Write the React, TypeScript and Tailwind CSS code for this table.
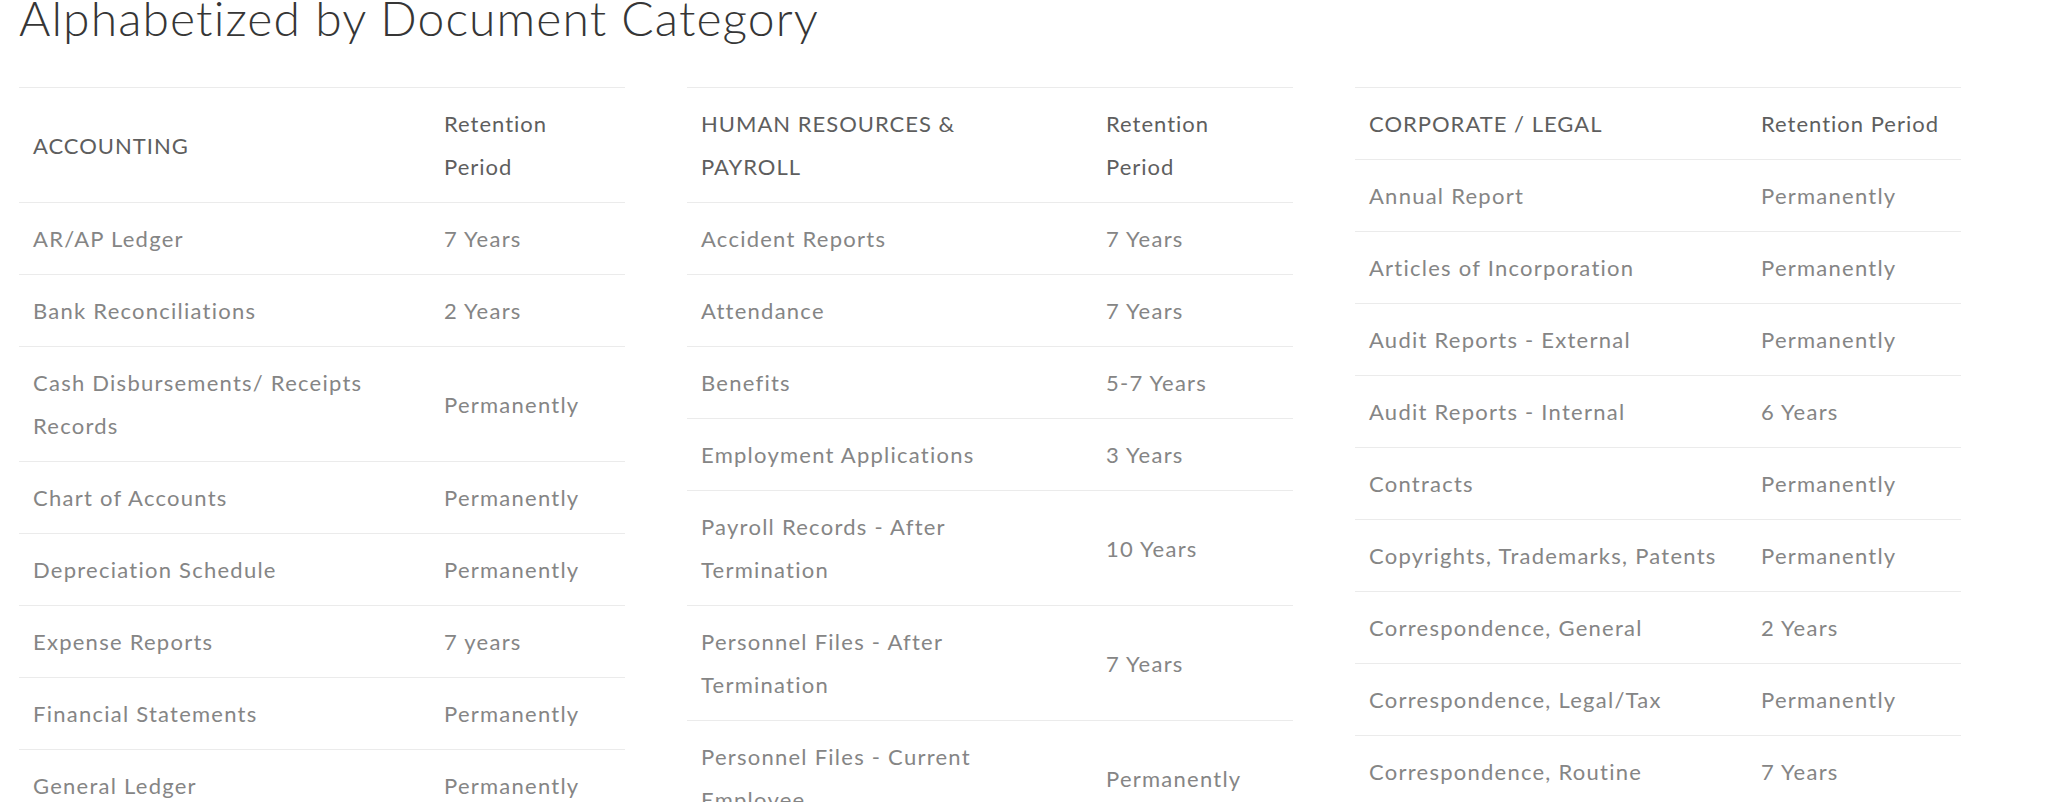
import React from "react";

type Row = [React.ReactNode, React.ReactNode];

type TableProps = {
  grid: string;
  header: Row;
  rows: Row[];
};

function DocTable({ grid, header, rows }: TableProps) {
  return (
    <div className="w-[606px] shrink-0 border-t border-[#ebebeb]">
      <div className={`grid ${grid} border-b border-[#ebebeb] text-[#5e5e5e] font-normal tracking-[1px]`}>
        <div className="self-center px-[14px] py-[14px] leading-[43px] whitespace-nowrap">{header[0]}</div>
        <div className="self-center px-[14px] py-[14px] leading-[43px] whitespace-nowrap">{header[1]}</div>
      </div>
      {rows.map((r, i) => (
        <div key={i} className={`grid ${grid} border-b border-[#ebebeb] text-[#858585] font-normal tracking-[1.25px]`}>
          <div className="self-center px-[14px] py-[14px] leading-[43px] whitespace-nowrap">{r[0]}</div>
          <div className="self-center px-[14px] py-[14px] leading-[43px] whitespace-nowrap">{r[1]}</div>
        </div>
      ))}
    </div>
  );
}

export default function App() {
  const accounting: Row[] = [
    ["AR/AP Ledger", "7 Years"],
    ["Bank Reconciliations", "2 Years"],
    [
      <>
        Cash Disbursements/ Receipts
        <br />
        Records
      </>,
      "Permanently",
    ],
    ["Chart of Accounts", "Permanently"],
    ["Depreciation Schedule", "Permanently"],
    ["Expense Reports", "7 years"],
    ["Financial Statements", "Permanently"],
    ["General Ledger", "Permanently"],
  ];

  const hr: Row[] = [
    ["Accident Reports", "7 Years"],
    ["Attendance", "7 Years"],
    ["Benefits", "5-7 Years"],
    ["Employment Applications", "3 Years"],
    [
      <>
        Payroll Records - After
        <br />
        Termination
      </>,
      "10 Years",
    ],
    [
      <>
        Personnel Files - After
        <br />
        Termination
      </>,
      "7 Years",
    ],
    [
      <>
        Personnel Files - Current
        <br />
        Employee
      </>,
      "Permanently",
    ],
  ];

  const corporate: Row[] = [
    ["Annual Report", "Permanently"],
    ["Articles of Incorporation", "Permanently"],
    ["Audit Reports - External", "Permanently"],
    ["Audit Reports - Internal", "6 Years"],
    ["Contracts", "Permanently"],
    ["Copyrights, Trademarks, Patents", "Permanently"],
    ["Correspondence, General", "2 Years"],
    ["Correspondence, Legal/Tax", "Permanently"],
    ["Correspondence, Routine", "7 Years"],
  ];

  return (
    <div className="min-h-[802px] bg-white font-['Lato','Open_Sans',sans-serif] text-[22px] pl-[19px]">
      <h1 className="text-[48px] leading-[36px] font-light text-[#363636] tracking-[1.1px]">
        Alphabetized by Document Category
      </h1>
      <div className="mt-[51px] flex gap-[62px] items-start">
        <DocTable
          grid="grid-cols-[411px_195px]"
          header={[
            "ACCOUNTING",
            <>
              Retention
              <br />
              Period
            </>,
          ]}
          rows={accounting}
        />
        <DocTable
          grid="grid-cols-[405px_201px]"
          header={[
            <>
              HUMAN RESOURCES &amp;
              <br />
              PAYROLL
            </>,
            <>
              Retention
              <br />
              Period
            </>,
          ]}
          rows={hr}
        />
        <DocTable
          grid="grid-cols-[392px_214px]"
          header={["CORPORATE / LEGAL", "Retention Period"]}
          rows={corporate}
        />
      </div>
    </div>
  );
}
